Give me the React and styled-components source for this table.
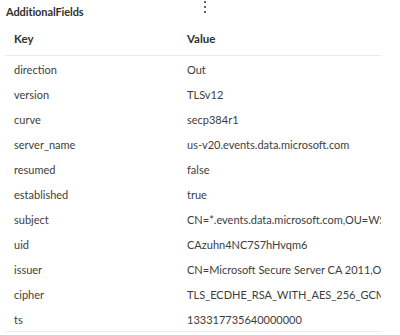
import styled, { createGlobalStyle } from "styled-components";

const rows = [
  ["direction", "Out"],
  ["version", "TLSv12"],
  ["curve", "secp384r1"],
  ["server_name", "us-v20.events.data.microsoft.com"],
  ["resumed", "false"],
  ["established", "true"],
  ["subject", "CN=*.events.data.microsoft.com,OU=WSE,O=Microsoft"],
  ["uid", "CAzuhn4NC7S7hHvqm6"],
  ["issuer", "CN=Microsoft Secure Server CA 2011,O=Microsoft"],
  ["cipher", "TLS_ECDHE_RSA_WITH_AES_256_GCM_SHA384"],
  ["ts", "133317735640000000"],
];

const GlobalStyle = createGlobalStyle`
  body {
    margin: 0;
    background: #fff;
    font-family: Lato, "Noto Sans", sans-serif;
  }
`;

const App = () => {
  return (
    <>
      <GlobalStyle />
      <Panel>
        <TitleBar>
          <Title>AdditionalFields</Title>
          <Kebab>
            <span />
            <span />
            <span />
          </Kebab>
        </TitleBar>
        <Table>
          <HeadRow>
            <HeadCell>Key</HeadCell>
            <HeadCell>Value</HeadCell>
          </HeadRow>
          {rows.map(([k, v]) => (
            <Row key={k}>
              <Cell>{k}</Cell>
              <Cell>{v}</Cell>
            </Row>
          ))}
        </Table>
      </Panel>
    </>
  );
};

export default App;

const Panel = styled.div`
  width: 400px;
  height: 335px;
  overflow: hidden;
`;

const TitleBar = styled.div`
  position: relative;
  height: 23px;
  display: flex;
  align-items: center;
  padding-left: 6px;
`;

const Title = styled.h2`
  margin: 0;
  font-size: 11px;
  font-weight: 700;
  color: #323130;
  letter-spacing: -0.1px;
`;

const Kebab = styled.div`
  position: absolute;
  left: 204px;
  top: 1px;
  display: flex;
  flex-direction: column;
  gap: 3px;

  span {
    width: 2px;
    height: 2px;
    border-radius: 50%;
    background: #323130;
  }
`;

const Table = styled.div`
  width: 376px;
  margin-left: 5px;
  border-bottom: 1px solid #edebe9;
`;

const HeadRow = styled.div`
  display: grid;
  grid-template-columns: 173px 203px;
  height: 32px;
  align-items: center;
  border-bottom: 1px solid #edebe9;
`;

const HeadCell = styled.div`
  padding-left: 9px;
  padding-bottom: 2px;
  font-size: 11.5px;
  font-weight: 700;
  color: #323130;
`;

const Row = styled.div`
  display: grid;
  grid-template-columns: 173px 203px;
  height: 25px;
  align-items: center;
`;

const Cell = styled.div`
  padding-left: 9px;
  padding-top: 2px;
  font-size: 11px;
  color: #403e3c;
  white-space: nowrap;
  overflow: hidden;
`;
